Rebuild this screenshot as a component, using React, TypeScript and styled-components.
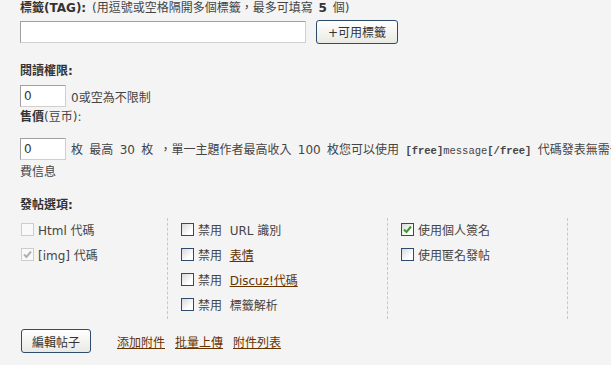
import React from 'react'
import styled, { createGlobalStyle, css } from 'styled-components'

const GlobalStyle = createGlobalStyle`
  html, body {
    margin: 0;
    padding: 0;
    background: #f4f4f4;
    overflow: hidden;
  }
  body {
    font-family: 'DejaVu Sans', 'Noto Sans CJK TC', sans-serif;
    font-size: 12px;
    color: #333;
  }
`

const colors = {
  text: '#333',
  soft: '#444',
  link: '#663300',
  boxBorder: '#2d4b6c',
  dash: '#c8c8c8',
}

type BoxKind = 'normal' | 'checked' | 'disabled' | 'disabledChecked'

interface IOption {
  kind: BoxKind
  label: React.ReactNode
}

function Box({ kind }: { kind: BoxKind }) {
  const checked = kind === 'checked' || kind === 'disabledChecked'
  return (
    <Check $kind={kind}>
      {checked && (
        <svg width="11" height="11" viewBox="0 0 11 11">
          <path
            d="M2 5.5 L4.5 8 L9 2.5"
            fill="none"
            stroke={kind === 'checked' ? '#3c9a2c' : '#b0b0b0'}
            strokeWidth="2"
          />
        </svg>
      )}
    </Check>
  )
}

function OptionList({ items, first }: { items: IOption[]; first?: boolean }) {
  return (
    <Column $first={first}>
      {items.map((o, i) => (
        <OptRow key={i}>
          <Box kind={o.kind} />
          <span>{o.label}</span>
        </OptRow>
      ))}
    </Column>
  )
}

export default function App() {
  const leftOptions: IOption[] = [
    { kind: 'disabled', label: 'Html 代碼' },
    { kind: 'disabledChecked', label: '[img] 代碼' },
  ]
  const middleOptions: IOption[] = [
    { kind: 'normal', label: <>禁用&nbsp; URL 識別</> },
    { kind: 'normal', label: <>禁用&nbsp; <A>表情</A></> },
    { kind: 'normal', label: <>禁用&nbsp; <A>Discuz!代碼</A></> },
    { kind: 'normal', label: <>禁用&nbsp; 標籤解析</> },
  ]
  const rightOptions: IOption[] = [
    { kind: 'checked', label: '使用個人簽名' },
    { kind: 'normal', label: '使用匿名發帖' },
  ]

  return (
    <>
      <GlobalStyle />
      <Page>
        <Line>
          <B>標籤(TAG):</B> <Soft>(用逗號或空格隔開多個標籤，最多可填寫 <B>5</B> 個)</Soft>
        </Line>
        <TagRow>
          <TextInput $width={286} />
          <Button $width={82}>+可用標籤</Button>
        </TagRow>

        <Label $top={20}>
          <B>閱讀權限:</B>
        </Label>
        <FieldRow $top={6}>
          <SmallInput defaultValue="0" />
          <Soft>0或空為不限制</Soft>
        </FieldRow>

        <Label $top={2}>
          <B>售價</B>
          <Soft>(豆币):</Soft>
        </Label>
        <PriceText>
          <NoWrap>
            <SmallInput defaultValue="0" />
            <Soft>
              枚 最高 30 枚 ，單一主題作者最高收入 100 枚您可以使用 <Mono><b>[free]</b>message<b>[/free]</b></Mono> 代碼發表無需付
            </Soft>
          </NoWrap>
          <WrapLine>費信息</WrapLine>
        </PriceText>

        <Label $top={12}>
          <B>發帖選項:</B>
        </Label>
        <Options>
          <OptionList items={leftOptions} first />
          <OptionList items={middleOptions} />
          <OptionList items={rightOptions} />
          <Column />
        </Options>

        <Footer>
          <Button $width={70}>編輯帖子</Button>
          <Links>
            <A>添加附件</A>
            <A>批量上傳</A>
            <A>附件列表</A>
          </Links>
        </Footer>
      </Page>
    </>
  )
}

const Page = styled.div`
  padding: 0 0 0 20px;
  width: 700px;
`
const Line = styled.div`
  line-height: 16px;
  height: 16px;
  white-space: nowrap;
  word-spacing: 2px;
`
const B = styled.b`
  color: ${colors.text};
`
const Soft = styled.span`
  color: ${colors.soft};
`
const Mono = styled.span`
  font-family: 'Liberation Mono', 'DejaVu Sans Mono', monospace;
  font-size: 10.5px;
  word-spacing: 0;
`
const A = styled.a`
  color: ${colors.link};
  text-decoration: underline;
  cursor: pointer;
`
const TagRow = styled.div`
  display: flex;
  align-items: center;
  gap: 10px;
  margin-top: 4px;
  height: 23px;
`
const inputBase = css`
  box-sizing: border-box;
  height: 22px;
  background: #fff;
  border: 1px solid;
  border-color: #a0a0a0 #cfcfcf #cfcfcf #a0a0a0;
  padding: 2px 3px;
  font-family: Tahoma, 'DejaVu Sans', sans-serif;
  font-size: 12px;
  color: #333;
  outline: none;
`
const TextInput = styled.input<{ $width: number }>`
  ${inputBase}
  width: ${(p) => p.$width}px;
`
const SmallInput = styled.input`
  ${inputBase}
  width: 46px;
  margin-right: 5px;
  flex: none;
`
const Button = styled.button<{ $width: number }>`
  box-sizing: border-box;
  width: ${(p) => p.$width}px;
  height: 24px;
  border: 1px solid ${colors.boxBorder};
  border-radius: 3px;
  background: linear-gradient(#ffffff, #e9e9e4);
  font-family: 'DejaVu Sans', 'Noto Sans CJK TC', sans-serif;
  font-size: 12px;
  color: #333;
  padding: 0;
`
const Label = styled.div<{ $top: number }>`
  margin-top: ${(p) => p.$top}px;
  line-height: 16px;
  height: 16px;
`
const FieldRow = styled.div<{ $top: number }>`
  display: flex;
  align-items: center;
  margin-top: ${(p) => p.$top}px;
  height: 22px;
`
const PriceText = styled.div`
  margin-top: 13px;
`
const NoWrap = styled.div`
  white-space: nowrap;
  height: 21px;
  display: flex;
  align-items: center;
  word-spacing: 2.5px;
`
const WrapLine = styled.div`
  color: ${colors.soft};
  height: 26px;
  line-height: 26px;
`
const Options = styled.div`
  display: flex;
  margin-top: 5px;
  height: 101px;
`
const Column = styled.div<{ $first?: boolean }>`
  box-sizing: border-box;
  display: flex;
  flex-direction: column;
  border-left: ${(p) => (p.$first ? 'none' : `1px dashed ${colors.dash}`)};
  padding-left: ${(p) => (p.$first ? '1px' : '13px')};
  &:nth-child(1) { width: 147px; }
  &:nth-child(2) { width: 220px; }
  &:nth-child(3) { width: 180px; }
  &:nth-child(4) { width: 60px; }
`
const OptRow = styled.div`
  box-sizing: border-box;
  display: flex;
  align-items: center;
  gap: 4px;
  height: 25px;
  padding-bottom: 2px;
  color: ${colors.soft};
  white-space: nowrap;
`
const Check = styled.span<{ $kind: BoxKind }>`
  box-sizing: border-box;
  width: 13px;
  height: 13px;
  display: inline-flex;
  align-items: center;
  justify-content: center;
  ${(p) =>
    p.$kind === 'disabled' || p.$kind === 'disabledChecked'
      ? css`
          border: 1px solid #cdcdcd;
          background: #f9f9f9;
        `
      : css`
          border: 1px solid ${colors.boxBorder};
          background: linear-gradient(135deg, #d8d8d8, #ffffff 70%);
        `}
`
const Footer = styled.div`
  display: flex;
  align-items: center;
  margin-top: 10px;
  padding-left: 1px;
`
const Links = styled.div`
  display: flex;
  gap: 10px;
  margin-left: 26px;
`
